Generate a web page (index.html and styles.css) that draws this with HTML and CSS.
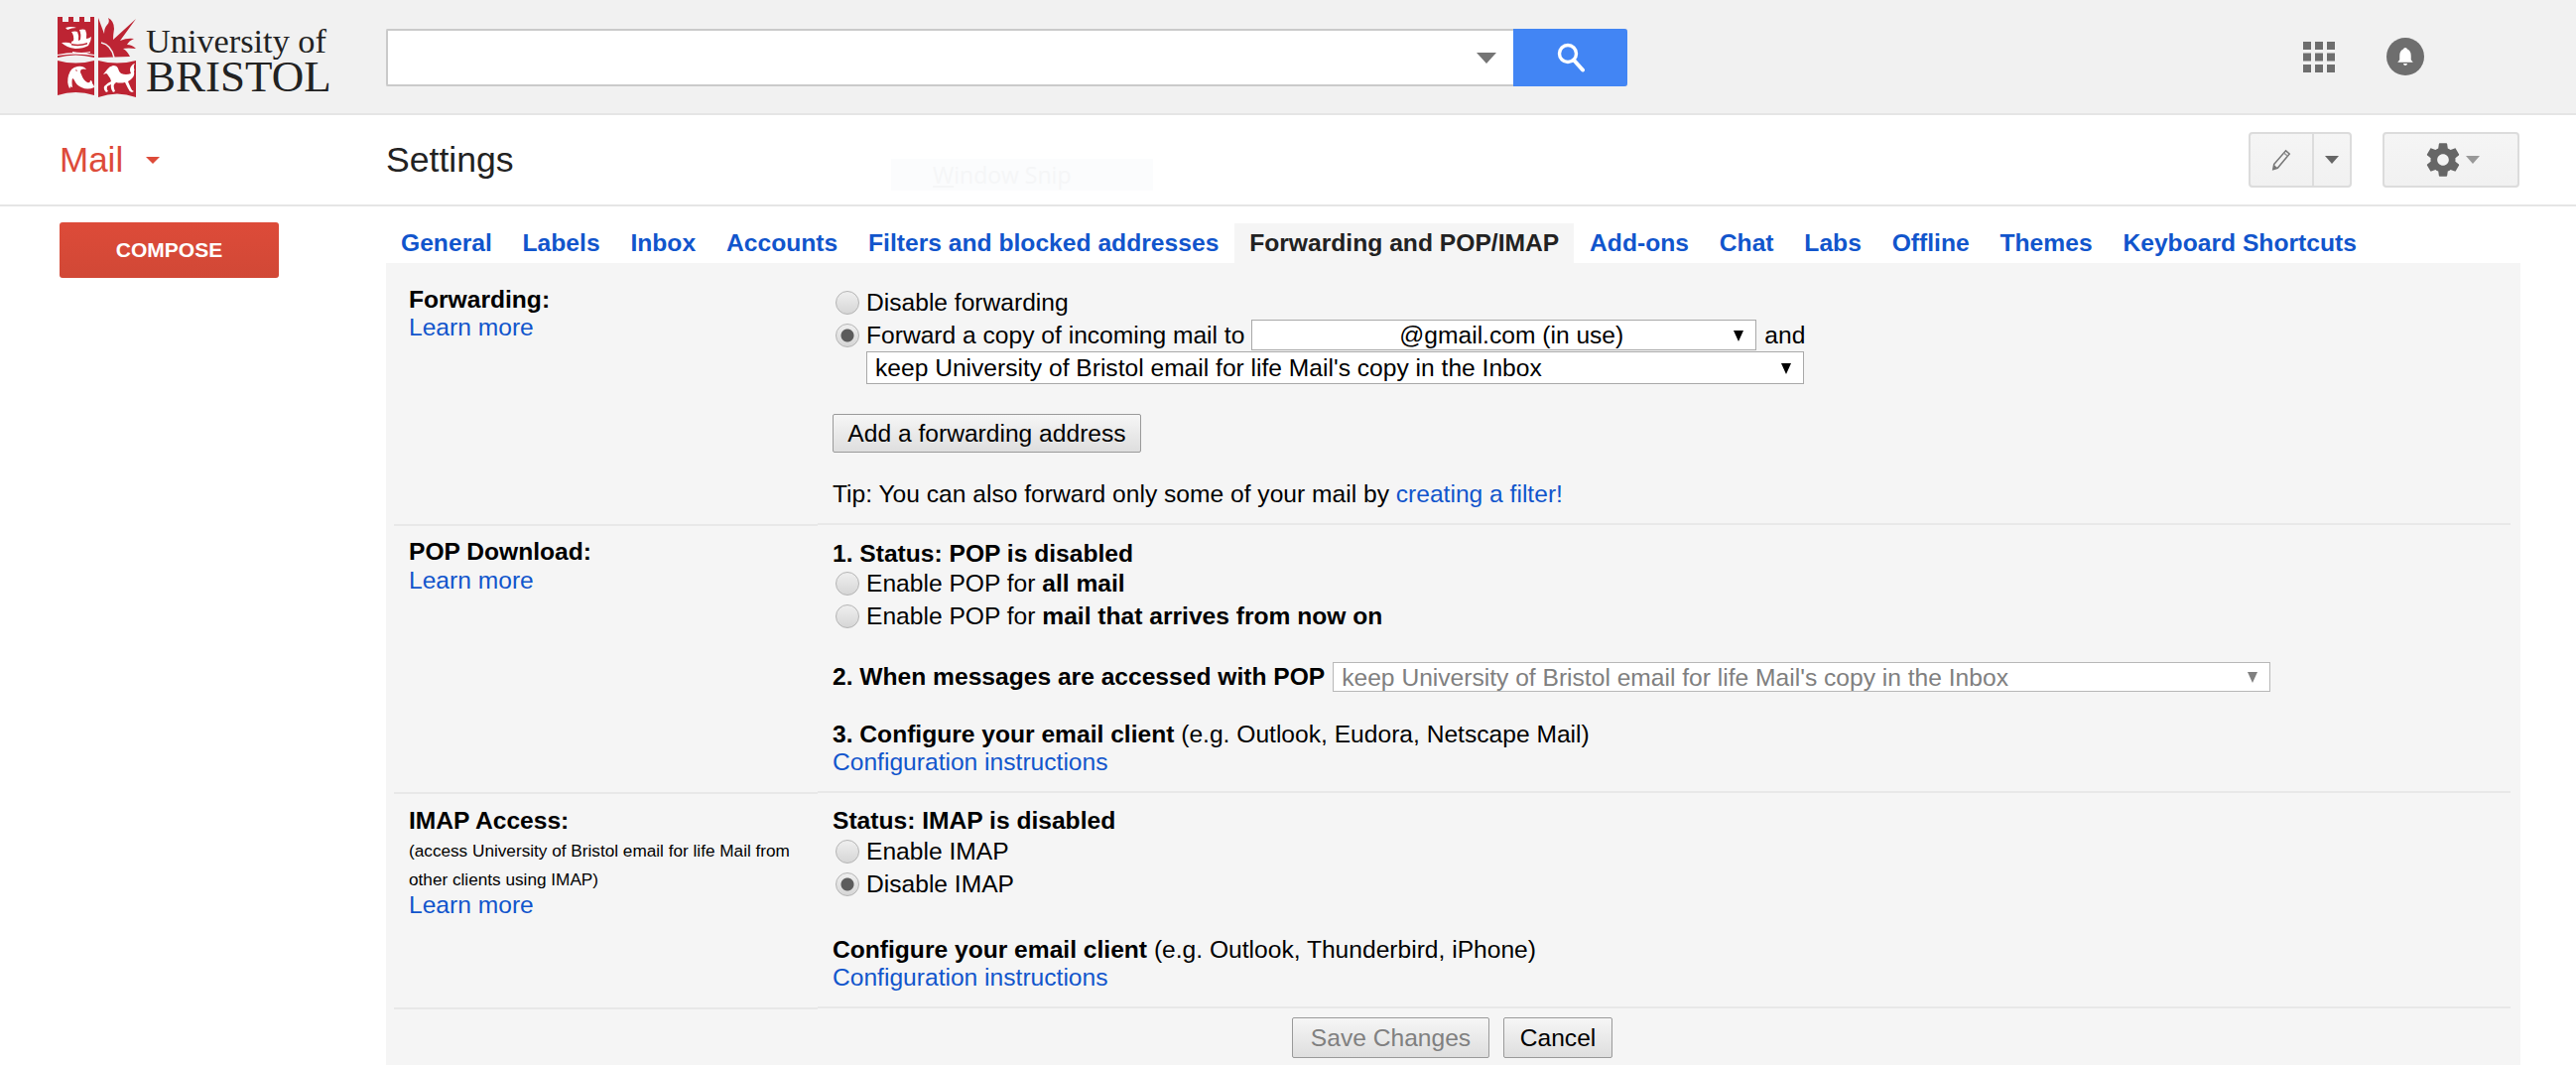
FILE: index.html
```html
<!DOCTYPE html>
<html lang="en">
<head>
    <meta charset="UTF-8">
    <meta name="viewport" content="width=device-width, initial-scale=1.0">
    <title>Settings - University of Bristol email for life Mail</title>
    <link rel="stylesheet" href="styles.css">
</head>
<body>
    <!-- top bar -->
    <header class="topbar">
        <div class="brand">
            <svg class="crest" viewBox="0 0 80 81" width="80" height="81">
                <path fill="#bd2433" d="M0 0h5v5h6V0h5v5h6V0h5v5h6V0h4v41q-19-5-37 0z"/>
                <path fill="#bd2433" d="M41 1l6 16q0-6 3-9q3-3 1-7q6 3 6 11q-1 6-1 11L79 2L63 24q7-3 14-2q-5 2-7 6q5 0 9 4q-8-1-13 0q4 2 7 8L41 41z"/>
                <path fill="#bd2433" d="M0 44q18 5 37 0v35q-19-6-37 0z"/>
                <path fill="#bd2433" d="M41 44q19 5 38 0v37q-19-7-38 0z"/>
                <path fill="none" stroke="#f1f1f1" stroke-width="1.500" d="M44 26q10 2 13 15"/>
                <!-- ship -->
                <path fill="#fff" d="M4 26q7-1 10 1l0-2 2-1q1-5-2-9q4-1 6 0q2 4 1 9l2-1q1-6-1-10q4-1 6 0q2 4 1 9q2 0 5-2q0 4-3 9q-5 3-13 3q-9-1-14-6z"/>
                <path fill="#bd2433" d="M14 27q8 2 16-1v1.500q-8 3-16 1z"/>
                <path fill="#fff" d="M0 38q18-4 37 0v1q-19-3-37 0zM15 35q9 2 18 0v1q-9 2-18 0zM8 11q6-2 11 0q-5 0-9 2z"/>
                <!-- dolphin -->
                <path fill="#fff" d="M11 59q2-8 9-9q6-1 9 3q-3-1-5 0q-2 2 0 5q2 6 6 8q3 1 3-2q2 0 2 3q2 2 2 4q-7 3-13 0q-5-2-7-7q-1-2-2-2q-1 3 0 9q-1 0-2-1q0 2-1 2q-3-6-1-13z"/>
                <path fill="#bd2433" d="M18 53l2 1-1 1z"/>
                <!-- horse -->
                <path fill="#fff" d="M50 53q2-3 6-4q4 0 5 3q1 4 3 5q5 2 10 0q-2-4 0-7q2-3 4-3q-2 2-1 5q1 1 0 3q1 4-2 7q-2 2-4 3l3 7q1 3 3 3l-2 1q-3-1-4-4l-3-6q-5 1-9 0l-2 2q-1 2 1 7l-2 1q-3-4-2-8l-4 2q-1 3 1 5l-2 1q-3-3-2-6q4-4 7-5q-1-4-3-6q-1-2-2-2l-3 1z"/>
            </svg>
            <div class="wordmark">
                <span class="wordmark-top">University of</span>
                <span class="wordmark-bottom">BRISTOL</span>
            </div>
        </div>
        <form class="search">
            <input class="search-input" type="text">
            <span class="search-caret"></span>
            <button class="search-btn" type="button">
                <svg viewBox="0 0 28 30" width="28" height="30">
                    <circle cx="11" cy="11" r="8.5" fill="none" stroke="#fff" stroke-width="3.4"/>
                    <path d="M17 17.500l9 10" stroke="#fff" stroke-width="4" stroke-linecap="round"/>
                </svg>
            </button>
        </form>
        <div class="top-icons">
            <svg viewBox="0 0 32 31" width="32" height="31">
                <g fill="#6e6e6e">
                    <rect width="8" height="8"/><rect x="12" width="8" height="8"/><rect x="24" width="8" height="8"/>
                    <rect y="11.500" width="8" height="8"/><rect x="12" y="11.500" width="8" height="8"/><rect x="24" y="11.500" width="8" height="8"/>
                    <rect y="23" width="8" height="8"/><rect x="12" y="23" width="8" height="8"/><rect x="24" y="23" width="8" height="8"/>
                </g>
            </svg>
            <svg viewBox="0 0 38 38" width="38" height="38">
                <circle cx="19" cy="19" r="19" fill="#6e6e6e"/>
                <path transform="translate(3.420 3.420) scale(.82)" fill="#fff" d="M19 8q2 0 2.500 2q4.500 2 4.500 8v5l2.500 3h-19l2.500-3v-5q0-6 4.500-8q.5-2 2.500-2zM16.500 27.500h5q-.5 2.500-2.500 2.500t-2.500-2.500z"/>
            </svg>
        </div>
    </header>

    <!-- mail / settings bar -->
    <div class="subbar">
        <div class="mail-menu">Mail<span class="mail-caret"></span></div>
        <div class="page-title">Settings</div>
        <div class="toolbar">
            <div class="tool-btn pencil-btn">
                <span class="pencil-part">
                    <svg viewBox="0 0 24 26" width="22" height="24">
                        <path d="M4 18L17 3l4 3.500L8 22l-5 1.500z" fill="none" stroke="#777" stroke-width="1.600"/>
                        <path d="M15 5.500l4 3.500" stroke="#999" stroke-width="1.500"/>
                        <path d="M3 23.500l1-5 4 3.500z" fill="#777"/>
                    </svg>
                </span>
                <span class="caret-part"><span class="tool-caret"></span></span>
            </div>
            <div class="tool-btn gear-btn">
                <svg viewBox="0 0 24 24" width="40" height="40">
                    <path fill="#666" d="M19.430 12.980c.04-.32.07-.64.07-.98s-.03-.66-.07-.98l2.110-1.650c.19-.15.24-.42.12-.64l-2-3.460c-.12-.22-.39-.3-.61-.22l-2.490 1c-.52-.4-1.080-.73-1.690-.98l-.38-2.650C14.460 2.180 14.250 2 14 2h-4c-.25 0-.46.18-.49.42l-.38 2.650c-.61.25-1.170.59-1.690.98l-2.490-1c-.23-.09-.49 0-.61.22l-2 3.460c-.13.22-.07.49.12.64l2.110 1.650c-.04.32-.07.65-.07.98s.03.66.07.98l-2.110 1.650c-.19.15-.24.42-.12.64l2 3.460c.12.22.39.3.61.22l2.490-1c.52.4 1.080.73 1.690.98l.38 2.650c.03.24.24.42.49.42h4c.25 0 .46-.18.49-.42l.38-2.650c.61-.25 1.170-.59 1.690-.98l2.490 1c.23.09.49 0 .61-.22l2-3.460c.12-.22.07-.49-.12-.64l-2.110-1.650zM12 15.500c-1.930 0-3.500-1.570-3.500-3.500s1.570-3.500 3.500-3.500 3.500 1.570 3.500 3.500-1.570 3.500-3.500 3.500z"/>
                </svg>
                <span class="tool-caret tool-caret-light"></span>
            </div>
        </div>
    </div>

    <div class="layout">
        <aside class="sidebar">
            <button class="compose" type="button">COMPOSE</button>
        </aside>

        <main class="main">
            <nav class="tabs">
                <a class="tab" href="#">General</a>
                <a class="tab" href="#">Labels</a>
                <a class="tab" href="#">Inbox</a>
                <a class="tab" href="#">Accounts</a>
                <a class="tab" href="#">Filters and blocked addresses</a>
                <a class="tab tab-active" href="#">Forwarding and POP/IMAP</a>
                <a class="tab" href="#">Add-ons</a>
                <a class="tab" href="#">Chat</a>
                <a class="tab" href="#">Labs</a>
                <a class="tab" href="#">Offline</a>
                <a class="tab" href="#">Themes</a>
                <a class="tab" href="#">Keyboard Shortcuts</a>
            </nav>

            <div class="panel">
                <!-- Forwarding -->
                <section class="row">
                    <div class="row-label forwarding-label">
                        <div class="label-title">Forwarding:</div>
                        <a class="link label-link" href="#">Learn more</a>
                    </div>
                    <div class="row-body forwarding-body">
                        <label class="line"><input type="radio" name="fwd" class="radio">Disable forwarding</label>
                        <div class="line">
                            <input type="radio" name="fwd" class="radio" checked>Forward a copy of incoming mail to
                            <span class="select select-address"><select><option>@gmail.com (in use)</option></select></span>
                            <span class="and">and</span>
                        </div>
                        <div class="line indent">
                            <span class="select select-keep"><select><option>keep University of Bristol email for life Mail's copy in the Inbox</option></select></span>
                        </div>
                        <button class="btn add-btn" type="button">Add a forwarding address</button>
                        <div class="text tip">Tip: You can also forward only some of your mail by <a class="link" href="#">creating a filter!</a></div>
                    </div>
                </section>

                <!-- POP -->
                <section class="row">
                    <div class="row-label pop-label">
                        <div class="label-title">POP Download:</div>
                        <a class="link label-link" href="#">Learn more</a>
                    </div>
                    <div class="row-body pop-body">
                        <div class="text pop-status"><b>1. Status: POP is disabled</b></div>
                        <label class="line"><input type="radio" name="pop" class="radio">Enable POP for&nbsp;<b>all mail</b></label>
                        <label class="line"><input type="radio" name="pop" class="radio">Enable POP for&nbsp;<b>mail that arrives from now on</b></label>
                        <div class="line when-line">
                            <b>2. When messages are accessed with POP</b>
                            <span class="select select-disabled"><select disabled><option>keep University of Bristol email for life Mail's copy in the Inbox</option></select></span>
                        </div>
                        <div class="text configure"><b>3. Configure your email client</b> (e.g. Outlook, Eudora, Netscape Mail)</div>
                        <div class="text"><a class="link" href="#">Configuration instructions</a></div>
                    </div>
                </section>

                <!-- IMAP -->
                <section class="row">
                    <div class="row-label imap-label">
                        <div class="label-title">IMAP Access:</div>
                        <div class="label-small">(access University of Bristol email for life Mail from other clients using IMAP)</div>
                        <a class="link label-link imap-link" href="#">Learn more</a>
                    </div>
                    <div class="row-body imap-body">
                        <div class="text"><b>Status: IMAP is disabled</b></div>
                        <label class="line"><input type="radio" name="imap" class="radio">Enable IMAP</label>
                        <label class="line"><input type="radio" name="imap" class="radio" checked>Disable IMAP</label>
                        <div class="text configure-imap"><b>Configure your email client</b> (e.g. Outlook, Thunderbird, iPhone)</div>
                        <div class="text"><a class="link" href="#">Configuration instructions</a></div>
                    </div>
                </section>

                <div class="actions">
                    <button class="btn action-btn save-btn" type="button">Save Changes</button>
                    <button class="btn action-btn cancel-btn" type="button">Cancel</button>
                </div>
            </div>
        </main>
    </div>

    <!-- leftover snipping tool tooltip, barely visible -->
    <div class="ghost-tip"><u>W</u>indow Snip</div>
</body>
</html>
```

FILE: styles.css
```css
* {
    box-sizing: border-box;
}
html, body {
    height: 100%;
}
body {
    margin: 0;
    display: flex;
    flex-direction: column;
    overflow: hidden;
    position: relative;
    background: #fff;
    color: #000;
    font-family: "Liberation Sans", Arial, sans-serif;
    font-size: 24.6px;
}

/* top bar */
.topbar {
    height: 116px;
    flex: none;
    display: flex;
    align-items: center;
    background: #f1f1f1;
    border-bottom: 2px solid #e5e5e5;
}
.brand {
    width: 389px;
    flex: none;
    padding-left: 58px;
    display: flex;
    gap: 9px;
    align-items: center;
}
.crest {
    flex: none;
}
.wordmark {
    display: flex;
    flex-direction: column;
    margin-top: 5px;
    font-family: "Liberation Serif", serif;
    color: #222;
}
.wordmark-top {
    font-size: 34.3px;
    line-height: 34px;
}
.wordmark-bottom {
    font-size: 45px;
    line-height: 38px;
}
.search {
    width: 1251px;
    height: 58px;
    margin-top: 2px;
    display: flex;
    align-items: center;
    background: #fff;
    border: 2px solid #cacaca;
    border-right: 0;
    border-radius: 2px;
}
.search-input {
    flex: 1;
    min-width: 0;
    height: 100%;
    border: 0;
    outline: 0;
    background: transparent;
}
.search-caret {
    width: 0;
    height: 0;
    margin-right: 17px;
    border-left: 10px solid transparent;
    border-right: 10px solid transparent;
    border-top: 11px solid #757575;
}
.search-btn {
    width: 115px;
    height: 58px;
    margin: -2px 0;
    padding: 0;
    display: flex;
    align-items: center;
    justify-content: center;
    border: 0;
    border-radius: 0 3px 3px 0;
    background: #4285f4;
}
.top-icons {
    margin-left: auto;
    padding-right: 153px;
    display: flex;
    align-items: center;
    gap: 52px;
}

/* mail / settings bar */
.subbar {
    height: 92px;
    flex: none;
    display: flex;
    align-items: center;
    border-bottom: 2px solid #e5e5e5;
    padding-right: 57px;
}
.mail-menu {
    width: 389px;
    flex: none;
    padding-left: 60px;
    display: flex;
    align-items: center;
    color: #dd4b39;
    font-size: 35px;
}
.mail-caret {
    width: 0;
    height: 0;
    margin-left: 23px;
    border-left: 7px solid transparent;
    border-right: 7px solid transparent;
    border-top: 7px solid #dd4b39;
}
.page-title {
    flex: 1;
    color: #222;
    font-size: 35.6px;
}
.toolbar {
    display: flex;
    gap: 31px;
}
.tool-btn {
    height: 56px;
    display: flex;
    align-items: center;
    background: linear-gradient(#f5f5f5, #f1f1f1);
    border: 2px solid #dcdcdc;
    border-radius: 4px;
}
.pencil-btn {
    width: 104px;
}
.pencil-part {
    width: 64px;
    height: 100%;
    display: flex;
    align-items: center;
    justify-content: center;
    border-right: 2px solid #dcdcdc;
}
.caret-part {
    flex: 1;
    display: flex;
    justify-content: center;
}
.tool-caret {
    width: 0;
    height: 0;
    border-left: 7px solid transparent;
    border-right: 7px solid transparent;
    border-top: 8px solid #666;
}
.tool-caret-light {
    border-top-color: #999;
}
.gear-btn {
    width: 138px;
    justify-content: center;
    gap: 3px;
}

/* page columns */
.layout {
    flex: 1;
    min-height: 0;
    display: flex;
}
.sidebar {
    width: 389px;
    flex: none;
    padding: 16px 0 0 60px;
}
.compose {
    width: 221px;
    height: 56px;
    padding: 0;
    border: 0;
    border-radius: 3px;
    background: linear-gradient(#dd4b39, #d14836);
    color: #fff;
    font-family: inherit;
    font-size: 21px;
    font-weight: bold;
}
.main {
    width: 2151px;
    flex: none;
    padding-top: 17px;
    display: flex;
    flex-direction: column;
}

/* tabs */
.tabs {
    display: flex;
    height: 40px;
    flex: none;
}
.tab {
    padding: 0 15px;
    margin-right: 0.8px;
    line-height: 39px;
    font-size: 24.65px;
    font-weight: bold;
    color: #1155cc;
    text-decoration: none;
    white-space: nowrap;
}
.tab-active {
    background: #f5f5f5;
    color: #222;
}

/* settings panel */
.panel {
    flex: 1;
    background: #f5f5f5;
    padding: 0 10px 0 8px;
}
.row {
    display: grid;
    grid-template-columns: 427px 1fr;
}
.row-label {
    padding-left: 15px;
    border-bottom: 2px solid #e8e8e8;
}
.row-body {
    padding-left: 15px;
    margin-bottom: 1px;
    border-bottom: 2px solid #e8e8e8;
}
.forwarding-label {
    padding-top: 23px;
}
.pop-label {
    padding-top: 12px;
}
.pop-label .label-link {
    margin-top: 1px;
}
.imap-label {
    padding-top: 13px;
}
.forwarding-body {
    padding-top: 23px;
    padding-bottom: 15px;
}
.pop-body {
    padding-top: 14px;
    padding-bottom: 15px;
}
.imap-body {
    padding-top: 13px;
    padding-bottom: 15px;
}
.label-title {
    font-weight: bold;
    line-height: 28px;
}
.label-link {
    display: block;
    line-height: 28px;
}
.label-small {
    margin-top: 2px;
    width: 400px;
    font-size: 17.2px;
    line-height: 29px;
}
.imap-link {
    margin-top: -3px;
}
.link {
    color: #1155cc;
    text-decoration: none;
}
.text {
    line-height: 28px;
    white-space: nowrap;
}
.pop-status {
    margin-bottom: -1px;
}
.line {
    height: 33px;
    display: flex;
    align-items: center;
    white-space: nowrap;
}
.indent {
    padding-left: 34px;
}
.and {
    margin-left: 8px;
}
.radio {
    appearance: none;
    width: 24px;
    height: 24px;
    flex: none;
    margin: 0 7px 0 3px;
    border: 1px solid #b4b4b4;
    border-radius: 50%;
    background: linear-gradient(#efefef, #d6d6d6);
}
.radio:checked {
    background: radial-gradient(circle, #5c5c5c 0, #5c5c5c 6px, transparent 7px), linear-gradient(#efefef, #d6d6d6);
}

/* native selects with our own arrow */
.select {
    position: relative;
    display: block;
}
.select select {
    appearance: none;
    display: block;
    width: 100%;
    height: 100%;
    padding: 0 8px;
    background: #fff;
    border: 1px solid #a9a9a9;
    border-radius: 0;
    color: #000;
    font-family: inherit;
    font-size: 24.6px;
    opacity: 1;
}
.select::after {
    content: "";
    position: absolute;
    top: 50%;
    right: 13px;
    margin-top: -5px;
    border-left: 5px solid transparent;
    border-right: 5px solid transparent;
    border-top: 11px solid #000;
}
.select-address {
    width: 509px;
    height: 31px;
    margin-left: 7px;
}
.select-address select {
    padding-left: 148px;
}
.select-keep {
    width: 945px;
    height: 33px;
}
.select-disabled {
    width: 945px;
    height: 30px;
    margin-left: 8px;
}
.select-disabled select {
    color: #808080;
    border-color: #b8b8b8;
}
.select-disabled::after {
    border-top-color: #808080;
}

/* buttons */
.btn {
    height: 39px;
    padding: 0;
    border: 1px solid #9a9a9a;
    border-radius: 2px;
    background: linear-gradient(#f6f6f6, #dedede);
    color: #000;
    font-family: inherit;
    font-size: 24.6px;
}
.add-btn {
    display: block;
    width: 311px;
    margin-top: 30px;
}
.tip {
    margin-top: 28px;
}
.when-line {
    height: 30px;
    margin-top: 30px;
}
.configure {
    margin-top: 29px;
}
.configure-imap {
    margin-top: 36px;
}
.actions {
    padding-top: 8px;
    display: flex;
    justify-content: center;
    gap: 14px;
}
.action-btn {
    height: 41px;
}
.save-btn {
    width: 199px;
    color: #808080;
}
.cancel-btn {
    width: 110px;
}

/* snipping tool tooltip left in the capture */
.ghost-tip {
    position: absolute;
    left: 898px;
    top: 160px;
    width: 264px;
    height: 32px;
    padding-left: 42px;
    background: #fbfcfd;
    color: #f5f6f7;
    font-family: "Open Sans", sans-serif;
    font-size: 23px;
    line-height: 32px;
}
```
